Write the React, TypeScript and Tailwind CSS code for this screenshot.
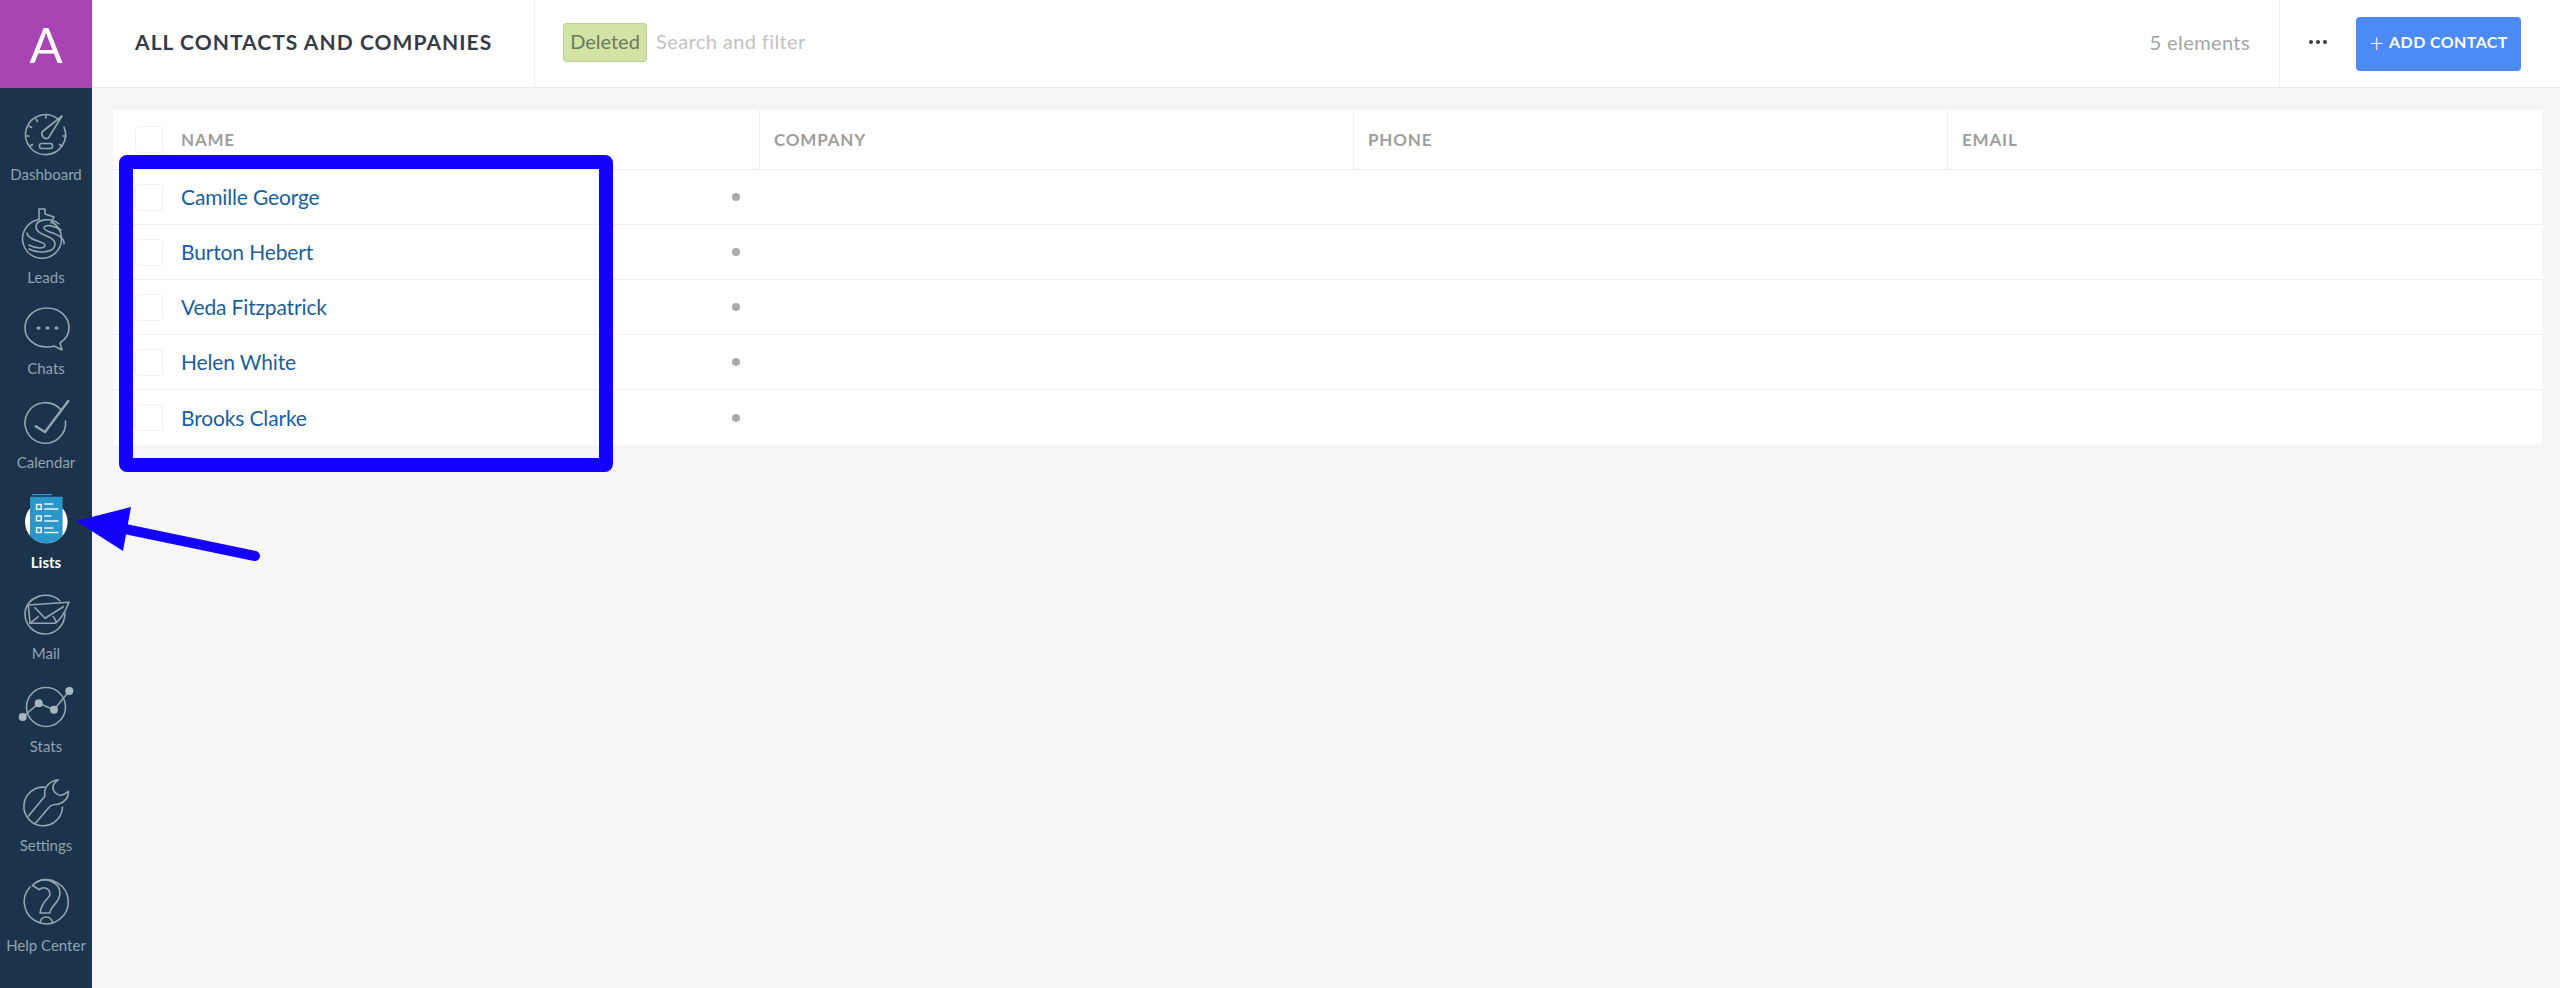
import React from "react";

const S = { fill: "none", stroke: "#94a6b1", strokeWidth: 1.6, strokeLinecap: "round" as const, strokeLinejoin: "round" as const, className: "overflow-visible" };

function Dashboard() {
  return (
    <svg width="56" height="56" viewBox="0 0 56 56" {...S}>
      <path d="M40 12 A20 20 0 1 0 46 20" />
      <path d="M44 9 L24.5 24.5 a4.6 4.6 0 0 0 6 6.5 Z" />
      <rect x="21.5" y="36.5" width="13" height="5" rx="2" />
      <path d="M28 8v3M11 19l2.5 1.5M8 29h3M45 29h3M12 39l2.5-1.5M44 39l-2.5-1.5M18 12l1.5 2.5" />
    </svg>
  );
}
function Leads() {
  return (
    <svg width="56" height="56" viewBox="0 0 56 56" {...S}>
      <path d="M21 9 V-1 h6 v5 l9 3 l-3 6" />
      <path d="M34 12 A19.5 19.5 0 1 1 21 9.5" />
      <path d="M41 14 C33 7 18 9 18 17 C18 26 37 25 37 34 C37 43 20 44 11 39" />
      <path d="M43 20 C36 15 26 14 26 18 C26 23 47 23 46 34" />
      <path d="M9 23 C10 31 27 31 27 35 C27 39 18 39 11 35" />
    </svg>
  );
}
function Chats() {
  return (
    <svg width="56" height="56" viewBox="0 0 56 56" {...S}>
      <path d="M29 7 C16 7 7 16 7 27 C7 38 17 46 29 46 C32 46 34 46 36 45 L44 49 L42 42 C48 38 51 33 51 27 C51 16 42 7 29 7 Z" />
      <path d="M20 27h1M29 27h1M38 27h1" strokeWidth="3" />
    </svg>
  );
}
function Calendar() {
  return (
    <svg width="56" height="56" viewBox="0 0 56 56" {...S}>
      <path d="M42.5 14.5 A20.3 20.3 0 1 0 47.5 26" />
      <path d="M17.7 31.3 L27 37 L50.3 6" strokeWidth="2.4" />
    </svg>
  );
}
function Lists() {
  return (
    <svg width="56" height="56" viewBox="0 0 56 56" fill="none" className="overflow-visible">
      <circle cx="28.3" cy="31" r="21.3" fill="#ffffff" />
      <path d="M12 5.7 H44.6 V44.7 A21.3 21.3 0 0 1 12 44.7 Z" fill="#2a96c9" />
      <rect x="14.3" y="3" width="20" height="1.3" fill="#2a96c9" />
      <g fill="none" stroke="#e6f4fa" strokeWidth="1.5">
        <rect x="18.5" y="13.5" width="4.7" height="4.7" />
        <rect x="18.5" y="25" width="4.7" height="4.7" />
        <rect x="18.5" y="36.8" width="4.7" height="4.7" />
        <path d="M26.3 13h9M26.3 18h14M26.3 25h7M26.3 30h14M26.3 37h9M26.3 41.5h14" />
      </g>
    </svg>
  );
}
function Mail() {
  return (
    <svg width="56" height="56" viewBox="0 0 56 56" {...S}>
      <path d="M42 15 C30 3 7 11 7 28 C7 39 16 48 27 48 C38 48 47 39 47 27" />
      <path d="M10.3 19 L51 16.3 C48 24 44 33 37 37.3 L12 37.3 Z" />
      <path d="M17 21.7 L27 32.3 L45.3 20.7M20.3 30.7 L12 37.3M35.3 30.7 L38.7 36.3" />
    </svg>
  );
}
function Stats() {
  return (
    <svg width="56" height="56" viewBox="0 0 56 56" {...S}>
      <circle cx="28" cy="28" r="19.5" />
      <path d="M4.7 38 L20.7 24.3 L36 30.7 L51.3 12" />
      <g fill="#a8b8c0" stroke="none">
        <circle cx="4.7" cy="38" r="4" />
        <circle cx="20.7" cy="24.3" r="4" />
        <circle cx="36" cy="30.7" r="4" />
        <circle cx="51.3" cy="12" r="4" />
      </g>
    </svg>
  );
}
function Settings() {
  return (
    <svg width="56" height="56" viewBox="0 0 56 56" {...S}>
      <path d="M27 12.2 A19.3 19.3 0 1 0 44.5 32" />
      <path d="M10.3 41.3 L27 21 C25 13 31 6 40.3 4.7 C36 8 34 12 35.5 15 C37 19 42 21 44 20 C46 20 48 18 50.3 16.3 C51 22 47 27 41 29 C38 30 34 29 32 31.3 L17 48.7" />
    </svg>
  );
}
function Help() {
  return (
    <svg width="56" height="56" viewBox="0 0 56 56" {...S}>
      <path d="M18.7 9 A22 22 0 1 1 12 14" />
      <path d="M14.3 12.3 L21.3 16.7 C25 13 32 15 32 21.7 C32 25 24 27 22 40 H32 C32 33 42 30 42 20 C42 10 28 3 18.7 9 Z" />
      <path d="M22 50 C23 42 33 42 34.7 50" />
    </svg>
  );
}

const nav = [
  { label: "Dashboard", Icon: Dashboard, cls: "h-[95px]", ic: "mb-[0px]" },
  { label: "Leads", Icon: Leads, cls: "h-[103px]", ic: "mb-[0px]" },
  { label: "Chats", Icon: Chats, cls: "h-[91px]", ic: "mb-[0px]" },
  { label: "Calendar", Icon: Calendar, cls: "h-[94px]", ic: "mb-[0px]" },
  { label: "Lists", Icon: Lists, cls: "h-[100px] font-bold text-white", ic: "mb-[4px]" },
  { label: "Mail", Icon: Mail, cls: "h-[91px]", ic: "mb-[0px]" },
  { label: "Stats", Icon: Stats, cls: "h-[93px]", ic: "mb-[0px]" },
  { label: "Settings", Icon: Settings, cls: "h-[99px]", ic: "mb-[3px]" },
  { label: "Help Center", Icon: Help, cls: "h-[100px]", ic: "mb-[5px]" },
];

const names = ["Camille George", "Burton Hebert", "Veda Fitzpatrick", "Helen White", "Brooks Clarke"];

function Check() {
  return <div className="w-[28px] h-[27px] rounded-[4px] border border-[#f0f0f0] bg-white shrink-0" />;
}

export default function App() {
  return (
    <div className="relative flex h-screen w-full overflow-hidden bg-[#f6f6f6] font-['Lato','Liberation_Sans',sans-serif]">
      <aside className="flex w-[92px] shrink-0 flex-col bg-[#1c344b]">
        <div className="flex h-[88px] shrink-0 items-center justify-center bg-[#a944b5] text-[49px] leading-none text-white">A</div>
        <nav className="flex flex-col">
          {nav.map(({ label, Icon, cls, ic }) => (
            <div key={label} className={`flex flex-col items-center justify-end text-[15px] leading-[18px] text-[#8fa3b0] ${cls}`}>
              <div className={ic}><Icon /></div>
              <span className="mt-[2px]">{label}</span>
            </div>
          ))}
        </nav>
      </aside>
      <main className="flex min-w-0 flex-1 flex-col">
        <header className="flex h-[88px] shrink-0 items-center border-b border-[#eaeaea] bg-white">
          <div className="flex h-full w-[443px] items-center border-r border-[#efefef] pl-[43px] pb-[3px]">
            <h1 className="text-[21px] font-bold tracking-[1.05px] text-[#363b44]">ALL CONTACTS AND COMPANIES</h1>
          </div>
          <div className="flex flex-1 items-center pl-[28px] pb-[2px]">
            <span className="flex h-[39px] w-[84px] items-center justify-center rounded-[3px] border border-[#bcd394] bg-[#d2e3a6] pb-[3px] text-[20px] text-[#6c7a60]">Deleted</span>
            <span className="ml-[9px] pb-[3px] text-[20px] tracking-[0.4px] text-[#c2c2c2]">Search and filter</span>
          </div>
          <div className="flex h-full items-center pr-[29px] pb-[3px] text-[20px] tracking-[0.4px] text-[#a3a3a3]">5 elements</div>
          <div className="flex h-full w-[77px] items-center justify-center border-l border-[#efefef] pb-[3px]">
            <span className="flex gap-[3px]">
              <i className="h-[4px] w-[4px] rounded-full bg-[#363b44]" />
              <i className="h-[4px] w-[4px] rounded-full bg-[#363b44]" />
              <i className="h-[4px] w-[4px] rounded-full bg-[#363b44]" />
            </span>
          </div>
          <button className="mr-[39px] flex h-[54px] w-[165px] shrink-0 items-center justify-center gap-[5px] rounded-[4px] bg-[#4c8bf5] pb-[3px] text-[16px] font-bold tracking-[0.4px] text-white">
            <span className="text-[25px] font-light leading-none">+</span>ADD CONTACT
          </button>
        </header>
        <section className="ml-[21px] mr-[18px] mt-[22px] bg-white">
          <div className="flex h-[60px] border-b border-[#eeeeee] text-[17px] font-bold tracking-[0.8px] text-[#9e9e9e]">
            <div className="flex w-[647px] items-center gap-[18px] border-r border-[#eeeeee] pl-[22px]"><Check />NAME</div>
            <div className="flex w-[594px] items-center border-r border-[#eeeeee] pl-[14px]">COMPANY</div>
            <div className="flex w-[594px] items-center border-r border-[#eeeeee] pl-[14px]">PHONE</div>
            <div className="flex flex-1 items-center pl-[14px]">EMAIL</div>
          </div>
          {names.map((n) => (
            <div key={n} className="flex h-[55px] items-center border-b border-[#f0f0f0] last:border-b-0">
              <div className="flex w-[647px] items-center pl-[22px] pr-[20px]">
                <Check />
                <a className="ml-[18px] flex-1 text-[21px] tracking-[-0.15px] text-[#1c5e98]">{n}</a>
                <i className="h-[8px] w-[8px] rounded-full bg-[#ababab]" />
              </div>
            </div>
          ))}
        </section>
      </main>
      <div className="absolute left-[119px] top-[155px] h-[317px] w-[494px] rounded-[8px] border-[14px] border-[#1400ff]" />
      <svg className="absolute left-[70px] top-[500px]" width="200" height="70" viewBox="0 0 200 70" fill="none">
        <path d="M6 21 L61 7 L53 51 Z" fill="#1400ff" />
        <path d="M55 29 L185 56" stroke="#1400ff" strokeWidth="10" strokeLinecap="round" />
      </svg>
    </div>
  );
}
